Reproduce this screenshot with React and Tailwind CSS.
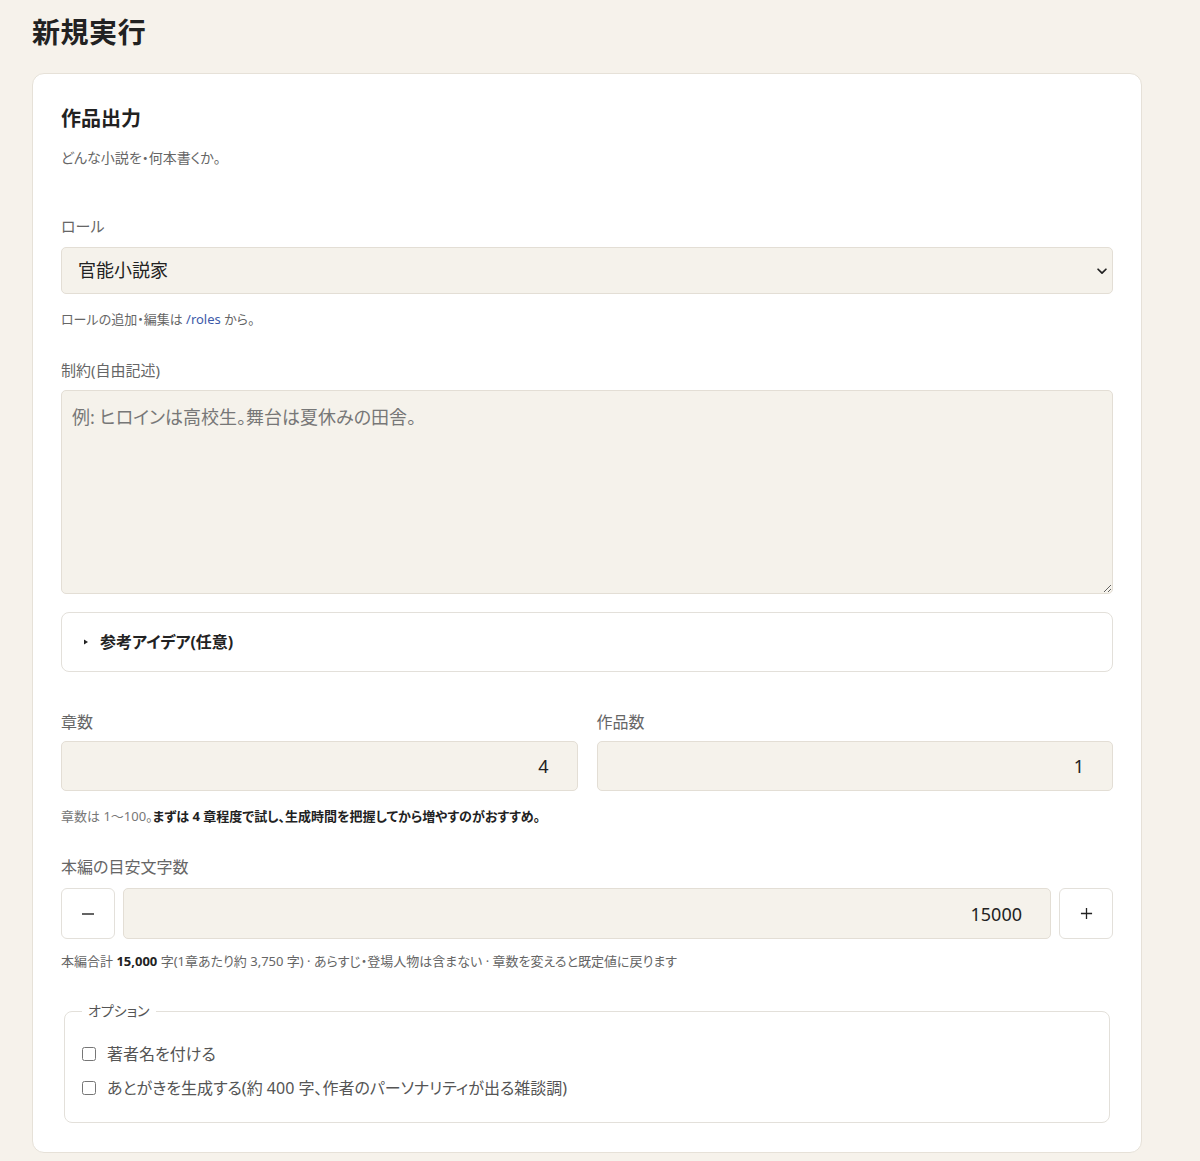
import React, { useState } from 'react'

const font = "font-['Noto_Sans','Noto_Sans_CJK_JP',sans-serif] [font-feature-settings:'palt']"

export default function App() {
  const [role, setRole] = useState('官能小説家')
  const [constraints, setConstraints] = useState('')
  const [chapters, setChapters] = useState(4)
  const [works, setWorks] = useState(1)
  const [chars, setChars] = useState(15000)
  const [withAuthor, setWithAuthor] = useState(false)
  const [afterword, setAfterword] = useState(false)

  const perChapter = Math.round(chars / chapters)

  return (
    <div className={`min-h-[1161px] bg-[#f6f2eb] px-8 pt-4 pb-2 text-[#222] ${font}`}>
      <h1 className="text-[28px] leading-[32px] font-bold tracking-[0.02em]">新規実行</h1>

      <div className="mt-[25px] w-[1110px] bg-white border border-[#e6e1d8] rounded-[12px] px-7 pt-[31px] pb-[29px]">
        <h2 className="text-[20px] leading-[28px] font-bold">作品出力</h2>
        <p className="mt-[15px] text-[14px] leading-[20px] text-[#666]">どんな小説を・何本書くか。</p>

        {/* ロール */}
        <label className="block mt-[47px] text-[15px] leading-[22px] text-[#666]">ロール</label>
        <div className="relative mt-[10px]">
          <select
            value={role}
            onChange={e => setRole(e.target.value)}
            className={`appearance-none block w-full h-[47px] rounded-[5px] border border-[#e3ded5] bg-[#f5f2eb] pl-4 pr-10 text-[18px] text-[#222] outline-none ${font}`}
          >
            <option>官能小説家</option>
            <option>推理作家</option>
            <option>SF作家</option>
          </select>
          <svg className="pointer-events-none absolute right-[4px] top-1/2 -translate-y-1/2 h-[14px] w-[14px] text-[#222]" viewBox="0 0 16 16" fill="none" stroke="currentColor" strokeWidth="2" strokeLinecap="round" strokeLinejoin="round">
            <path d="M3.5 6l4.5 4.5L12.5 6" />
          </svg>
        </div>
        <p className="mt-4 text-[13px] leading-[18px] text-[#666]">
          ロールの追加・編集は <a href="#" className="text-[#3d5aa8]">/roles</a> から。
        </p>

        {/* 制約 */}
        <label className="block mt-[31px] text-[15px] leading-[22px] text-[#666]">制約(自由記述)</label>
        <textarea
          value={constraints}
          onChange={e => setConstraints(e.target.value)}
          placeholder="例: ヒロインは高校生。舞台は夏休みの田舎。"
          className={`mt-[9px] block w-full h-[204px] rounded-[5px] border border-[#e3ded5] bg-[#f5f2eb] px-[10px] pt-[13px] text-[18px] leading-[26px] text-[#222] placeholder:text-[#777] outline-none ${font}`}
        />

        <details className="mt-[18px] rounded-[8px] border border-[#e3e0da]">
          <summary className="list-none [&::-webkit-details-marker]:hidden flex items-center h-[58px] pl-[21px] cursor-pointer">
            <svg className="h-[6px] w-[6px] text-[#222]" viewBox="0 0 6 6" fill="currentColor">
              <path d="M1 0.5L5 3L1 5.5z" />
            </svg>
            <span className="ml-[11px] text-[16px] font-bold">参考アイデア(任意)</span>
          </summary>
          <div className="px-5 pb-4 text-[14px] text-[#666]">アイデアを自由に入力できます。</div>
        </details>

        {/* 章数・作品数 */}
        <div className="mt-[39px] grid grid-cols-2 gap-x-[19px]">
          <div>
            <label className="block text-[16px] leading-[22px] text-[#666]">章数</label>
            <input
              type="number"
              value={chapters}
              min={1}
              max={100}
              onChange={e => setChapters(Number(e.target.value) || 1)}
              className={`mt-2 block w-full h-[50px] rounded-[5px] border border-[#e3ded5] bg-[#f5f2eb] pr-[13px] text-right text-[18px] text-[#222] outline-none ${font}`}
            />
          </div>
          <div>
            <label className="block text-[16px] leading-[22px] text-[#666]">作品数</label>
            <input
              type="number"
              value={works}
              min={1}
              onChange={e => setWorks(Number(e.target.value) || 1)}
              className={`mt-2 block w-full h-[50px] rounded-[5px] border border-[#e3ded5] bg-[#f5f2eb] pr-[13px] text-right text-[18px] text-[#222] outline-none ${font}`}
            />
          </div>
        </div>
        <p className="mt-4 text-[13px] leading-[18px] text-[#777]">
          章数は 1〜100。<span className="font-bold text-[#222]">まずは 4 章程度で試し、生成時間を把握してから増やすのがおすすめ。</span>
        </p>

        {/* 文字数 */}
        <label className="block mt-[31px] text-[16px] leading-[22px] text-[#666]">本編の目安文字数</label>
        <div className="mt-[10px] flex gap-2">
          <button
            type="button"
            onClick={() => setChars(c => Math.max(1000, c - 1000))}
            className="w-[54px] h-[51px] shrink-0 rounded-[6px] border border-[#e3e0da] bg-white flex items-center justify-center text-[#222]"
          >
            <svg className="h-[14px] w-[14px]" viewBox="0 0 14 14" stroke="currentColor" strokeWidth="1.4"><path d="M1 7h12" /></svg>
          </button>
          <input
            type="number"
            value={chars}
            onChange={e => setChars(Number(e.target.value) || 0)}
            className={`flex-1 min-w-0 h-[51px] rounded-[5px] border border-[#e3ded5] bg-[#f5f2eb] pr-[13px] text-right text-[18px] text-[#222] outline-none ${font}`}
          />
          <button
            type="button"
            onClick={() => setChars(c => c + 1000)}
            className="w-[54px] h-[51px] shrink-0 rounded-[6px] border border-[#e3e0da] bg-white flex items-center justify-center text-[#222]"
          >
            <svg className="h-[13px] w-[13px]" viewBox="0 0 14 14" stroke="currentColor" strokeWidth="1.4"><path d="M1 7h12M7 1v12" /></svg>
          </button>
        </div>
        <p className="mt-[13px] text-[13px] leading-[18px] text-[#666]">
          本編合計 <span className="font-bold text-[#222]">{chars.toLocaleString('en-US')}</span> 字(1章あたり約 {perChapter.toLocaleString('en-US')} 字) · あらすじ・登場人物は含まない · 章数を変えると既定値に戻ります
        </p>

        {/* オプション */}
        <fieldset className="mt-[31px] mx-[3px] rounded-[8px] border border-[#e3e0da] pl-[17px] pb-[23px]">
          <legend className="px-[6px] text-[14px] leading-[20px] text-[#555]">オプション</legend>
          <label className="mt-[22px] flex items-center h-[22px] text-[16px] text-[#555]">
            <input
              type="checkbox"
              checked={withAuthor}
              onChange={e => setWithAuthor(e.target.checked)}
              className="h-[14px] w-[14px] m-0"
            />
            <span className="ml-[11px]">著者名を付ける</span>
          </label>
          <label className="mt-3 flex items-center h-[22px] text-[16px] text-[#555]">
            <input
              type="checkbox"
              checked={afterword}
              onChange={e => setAfterword(e.target.checked)}
              className="h-[14px] w-[14px] m-0"
            />
            <span className="ml-[11px]">あとがきを生成する(約 400 字、作者のパーソナリティが出る雑談調)</span>
          </label>
        </fieldset>
      </div>
    </div>
  )
}
